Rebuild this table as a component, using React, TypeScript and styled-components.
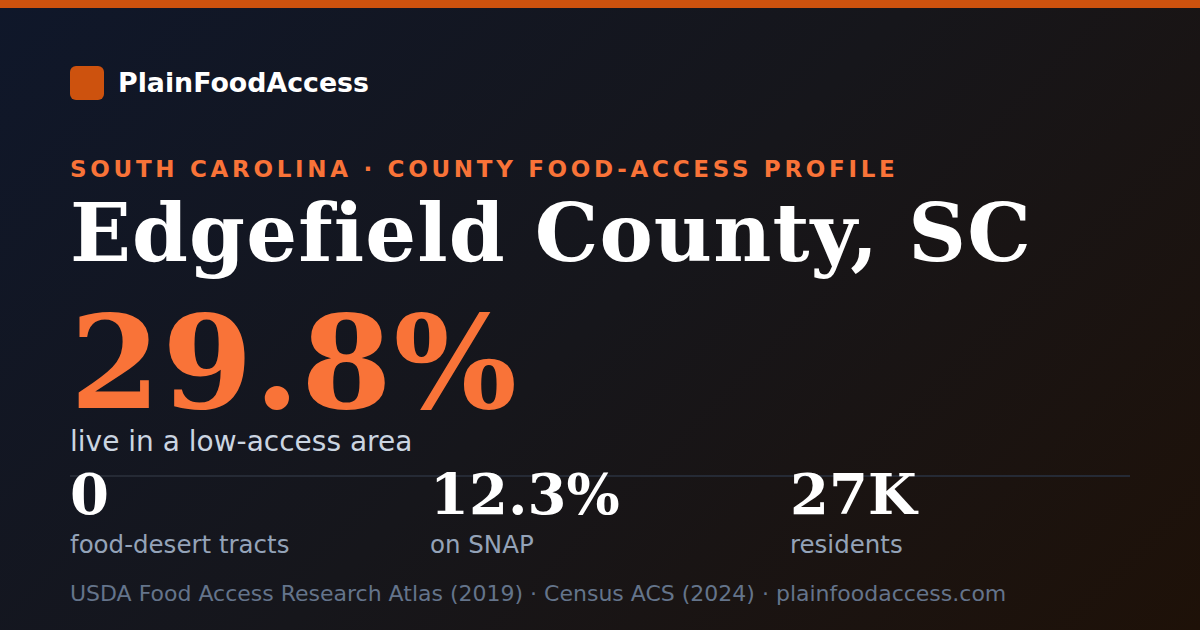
import React from "react";
import styled, { createGlobalStyle } from "styled-components";

const Global = createGlobalStyle`
  html, body { margin: 0; padding: 0; background: #141519; }
  #root { width: 1200px; height: 630px; overflow: hidden; }
`;

const Card = styled.div`
  width: 1200px;
  height: 630px;
  box-sizing: border-box;
  background: linear-gradient(135deg, #0f172a 0%, #16161b 50%, #1e1108 100%);
  display: flex;
  flex-direction: column;
  font-family: "DejaVu Sans", "Noto Sans", sans-serif;
`;

const TopBar = styled.div`
  height: 8px;
  background: #cd520e;
  flex-shrink: 0;
`;

const Body = styled.div`
  display: flex;
  flex-direction: column;
  padding: 58px 70px 0;
`;

const Brand = styled.div`
  display: flex;
  align-items: center;
  gap: 14px;
  height: 34px;
`;

const BrandMark = styled.div`
  width: 34px;
  height: 34px;
  border-radius: 6px;
  background: #cd520e;
`;

const BrandName = styled.div`
  font-size: 26.8px;
  line-height: 1;
  font-weight: 700;
  color: #ffffff;
`;

const Kicker = styled.div`
  margin-top: 58px;
  font-size: 23px;
  line-height: 1;
  font-weight: 700;
  letter-spacing: 3.7px;
  color: #f97338;
  white-space: nowrap;
`;

const Title = styled.h1`
  margin: 12px 0 0;
  font-family: "DejaVu Serif", "Liberation Serif", serif;
  font-size: 80px;
  line-height: 1;
  font-weight: 700;
  letter-spacing: 1.1px;
  color: #ffffff;
  white-space: nowrap;
`;

const BigStat = styled.div`
  margin-top: 25px;
  font-family: "DejaVu Serif", "Liberation Serif", serif;
  font-size: 130px;
  line-height: 1;
  font-weight: 700;
  letter-spacing: 1.7px;
  color: #f97338;
`;

const BigLabel = styled.div`
  font-size: 28px;
  line-height: 1;
  color: #cbd5e1;
`;

const Stats = styled.div`
  margin-top: 19px;
  border-top: 2px solid #252a35;
  display: grid;
  grid-template-columns: 360px 360px 1fr;
`;

const Stat = styled.div`
  display: flex;
  flex-direction: column;
`;

const StatValue = styled.div`
  margin-top: -11px;
  font-family: "DejaVu Serif", "Liberation Serif", serif;
  font-size: 56px;
  line-height: 1;
  font-weight: 700;
  color: #ffffff;
`;

const StatLabel = styled.div`
  margin-top: 11px;
  font-size: 24.5px;
  line-height: 1;
  color: #94a3b8;
`;

const Footer = styled.div`
  margin-top: 25px;
  font-size: 22px;
  line-height: 1;
  color: #64748b;
  white-space: nowrap;
`;

const stats = [
  { value: "0", label: "food-desert tracts" },
  { value: "12.3%", label: "on SNAP" },
  { value: "27K", label: "residents" },
];

export default function App() {
  return (
    <>
      <Global />
      <Card>
        <TopBar />
        <Body>
          <Brand>
            <BrandMark />
            <BrandName>PlainFoodAccess</BrandName>
          </Brand>
          <Kicker>SOUTH CAROLINA · COUNTY FOOD-ACCESS PROFILE</Kicker>
          <Title>Edgefield County, SC</Title>
          <BigStat>29.8%</BigStat>
          <BigLabel>live in a low-access area</BigLabel>
          <Stats>
            {stats.map((s) => (
              <Stat key={s.label}>
                <StatValue>{s.value}</StatValue>
                <StatLabel>{s.label}</StatLabel>
              </Stat>
            ))}
          </Stats>
          <Footer>
            USDA Food Access Research Atlas (2019) · Census ACS (2024) · plainfoodaccess.com
          </Footer>
        </Body>
      </Card>
    </>
  );
}
